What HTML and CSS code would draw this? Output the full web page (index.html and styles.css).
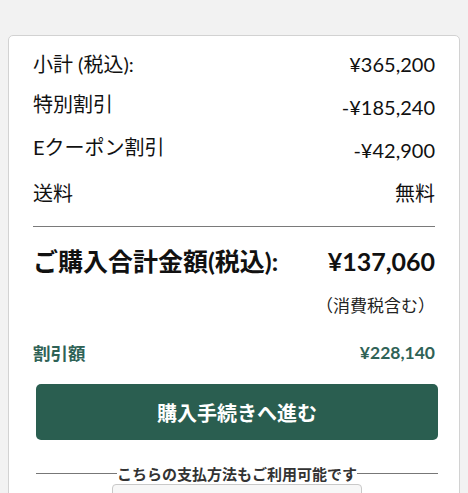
FILE: index.html
```html
<!DOCTYPE html>
<html lang="ja">
	<head>
		<meta charset="utf-8" />
		<title>ご注文内容</title>
		<link rel="stylesheet" href="styles.css">
	</head>
	<body>
		<div class="summary">
			<div class="row">
				<span class="label">小計 (税込):</span>
				<span class="value">¥365,200</span>
			</div>
			<div class="row split">
				<span class="label">特別割引</span>
				<span class="value">-¥185,240</span>
			</div>
			<div class="row split">
				<span class="label">Eクーポン割引</span>
				<span class="value">-¥42,900</span>
			</div>
			<div class="row">
				<span class="label">送料</span>
				<span class="value">無料</span>
			</div>

			<hr class="rule">

			<div class="total">
				<span class="label">ご購入合計金額(税込):</span>
				<span class="value">¥137,060</span>
			</div>
			<div class="tax-note">（消費税含む）</div>

			<div class="discount">
				<span class="label">割引額</span>
				<span class="value">¥228,140</span>
			</div>

			<div class="actions">
				<button class="checkout">購入手続きへ進む</button>
				<div class="divider"><span>こちらの支払方法もご利用可能です</span></div>
				<div class="pay-box"></div>
			</div>
		</div>
	</body>
</html>
```

FILE: styles.css
```css
body {
	margin: 0;
	background: #f2f2f2;
	color: #111;
	font-family: Lato, "Noto Sans CJK JP", sans-serif;
	overflow: hidden;
}

.summary {
	margin: 35px 8px 0 8px;
	padding: 6px 24px 40px 24px;
	background: #fff;
	border: 1px solid #d2d2d2;
	border-radius: 5px;
}

.row {
	display: flex;
	justify-content: space-between;
	align-items: center;
	height: 43px;
	font-size: 20px;
	line-height: 24px;
}
.row.split .label {
	margin-bottom: 6px;
}

.rule {
	margin: 12px 0 0 0;
	border: none;
	border-top: 1px solid #7a7a7a;
}

.total {
	display: flex;
	justify-content: space-between;
	align-items: center;
	height: 40px;
	margin-top: 14px;
	font-size: 25px;
	font-weight: bold;
	line-height: 30px;
}

.tax-note {
	margin-top: 13px;
	text-align: right;
	font-size: 17px;
	line-height: 24px;
	color: #222;
}

.discount {
	display: flex;
	justify-content: space-between;
	align-items: center;
	margin-top: 22px;
	height: 24px;
	font-size: 17.5px;
	font-weight: bold;
	color: #2f6256;
}

.actions {
	margin: 20px -3px 0 3px;
}

.checkout {
	display: block;
	width: 100%;
	height: 56px;
	border: none;
	border-radius: 5px;
	background: #2a5e50;
	color: #fff;
	font-family: Lato, "Noto Sans CJK JP", sans-serif;
	font-size: 20px;
	font-weight: bold;
}

.divider {
	display: flex;
	align-items: center;
	margin-top: 23px;
	height: 20px;
	font-size: 15px;
	font-weight: bold;
	color: #333;
}
.divider::before,
.divider::after {
	content: "";
	flex: 1;
	border-top: 1px solid #777;
}

.pay-box {
	width: 248px;
	height: 50px;
	margin: 1px auto 0 auto;
	border: 1px solid #c9c9c9;
	border-radius: 4px;
	background: #f7f7f7;
}
```
